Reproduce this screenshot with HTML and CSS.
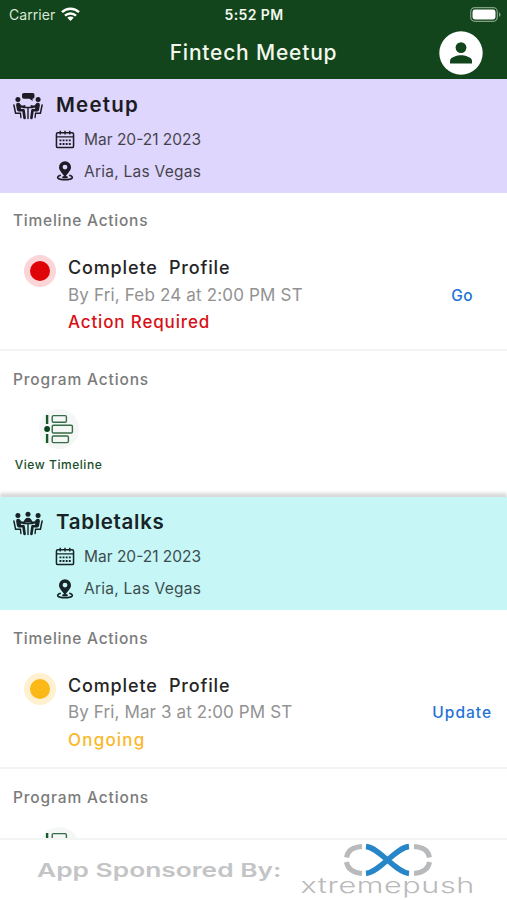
FILE: index.html
```html
<!DOCTYPE html>
<html lang="en">
<head>
<meta charset="utf-8">
<title>Fintech Meetup</title>
<link rel="stylesheet" href="styles.css">
</head>
<body>
<svg class="defs" aria-hidden="true">
  <symbol id="calendar" viewBox="0 0 20 20">
    <rect x="1" y="3" width="18" height="15.500" rx="1.500" fill="none" stroke="currentColor" stroke-width="1.600"/>
    <path d="M1 7.200h18M5 .8v4M10 .8v4M15 .8v4" fill="none" stroke="currentColor" stroke-width="1.500"/>
    <path d="M4.200 10.900h11.800M4.200 14.700h11.800" fill="none" stroke="currentColor" stroke-width="2" stroke-dasharray="2 1.270"/>
  </symbol>
  <symbol id="pin" viewBox="0 0 18 20">
    <path fill="currentColor" fill-rule="evenodd" d="M9 .2a6 6 0 0 0-6 6C3 9.700 6.500 12 9 16.200c2.500-4.200 6-6.500 6-10A6 6 0 0 0 9 .2zm0 3.500a2.400 2.400 0 1 1 0 4.800 2.400 2.400 0 0 1 0-4.800z"/>
    <path d="M4.800 14.300C-.5 15.500.8 18.700 9 18.700s9.500-3.200 4.200-4.400" fill="none" stroke="currentColor" stroke-width="1.600"/>
    <ellipse cx="9" cy="16.200" rx="3" ry="1.200" fill="currentColor"/>
  </symbol>
  <symbol id="seated" viewBox="0 0 30 23">
    <g fill="none" stroke="currentColor" stroke-linecap="round" stroke-linejoin="round">
      <path stroke-width="1.500" d="M.9 8l1.700 8.300h4.800M29.100 8l-1.700 8.300h-4.800"/>
      <path stroke-width="4.200" d="M5.200 7.800l.8 4.600M24.800 7.800l-.8 4.600"/>
      <path stroke-width="2" d="M6 7.500l2.600 2.300 3-.7M24 7.500l-2.600 2.300-3-.7"/>
      <path stroke-width="2.600" d="M7 13.200h3.500l1.100 7.800M23 13.200h-3.500l-1.100 7.800"/>
      <path stroke-width="1.400" d="M7.500 16.500l.4 4M22.500 16.500l-.4 4M10 10.500h10M15 11v10.500"/>
    </g>
    <circle cx="4.900" cy="2.600" r="2.500" fill="currentColor"/><circle cx="25.100" cy="2.600" r="2.500" fill="currentColor"/>
  </symbol>
  <symbol id="timeline" viewBox="0 0 40 40">
    <circle cx="20" cy="20" r="20" fill="#f5f7f6"/>
    <g fill="none" stroke="#356b47" stroke-width="1.400">
      <rect x="13.200" y="6.600" width="14.200" height="6.600" rx="1.300"/>
      <rect x="13.200" y="16.200" width="20.200" height="7.800" rx="1.300"/>
      <rect x="13.200" y="27" width="16.200" height="6.600" rx="1.300"/>
      <path stroke="#19572d" stroke-width="2.400" d="M8.100 6v9M8.100 25v9"/>
    </g>
    <circle cx="8.100" cy="20" r="2.900" fill="#0c4321"/>
  </symbol>
</svg>

<div class="phone">
  <header class="top">
    <div class="status">
      <div class="carrier"><span>Carrier</span>
        <svg width="19" height="14" viewBox="0 0 19 14"><g fill="none" stroke="#fff" stroke-width="2.500"><path d="M1 5.200a12.200 12.200 0 0 1 17 0M4 8.600a8 8 0 0 1 11 0"/></g><path d="M6.300 10.700a4.600 4.600 0 0 1 6.400 0L9.500 14z" fill="#fff"/></svg>
      </div>
      <span class="clock">5:52 PM</span>
      <svg class="battery" width="31" height="15" viewBox="0 0 31 15"><rect x=".7" y=".7" width="26.600" height="13.600" rx="4" fill="none" stroke="#82a184" stroke-width="1.200"/><rect x="2.500" y="2.500" width="23" height="10" rx="2.400" fill="#fff"/><path d="M29 5.200c2 .8 2 3.800 0 4.600z" fill="#82a184"/></svg>
    </div>
    <div class="titlebar">
      <h1>Fintech Meetup</h1>
      <svg class="avatar" width="44" height="44" viewBox="0 0 44 44"><circle cx="22" cy="22" r="21.700" fill="#fff"/><circle cx="22" cy="16.600" r="5.400" fill="#12451c"/><path d="M11 32.500v-2.700c0-3.600 7.300-5.500 11-5.500s11 1.900 11 5.500v2.700z" fill="#12451c"/></svg>
    </div>
  </header>

  <main class="feed">
    <section class="card">
      <div class="event event-meetup">
        <svg class="group" width="30" height="28" viewBox="0 0 30 28"><path d="M11 0h8.500c1.500 0 2 .7 2 2v1.800c0 1.300-.7 2-2 2l.2 2.200-3.200-2.200H11c-1.400 0-2-.7-2-2V2c0-1.300.6-2 2-2z" fill="#1e1b26"/><use href="#seated" y="4" width="30" height="23"/></svg>
        <h2 class="name-meetup">Meetup</h2>
        <div class="detail"><svg width="20" height="19"><use href="#calendar"/></svg><span class="date">Mar 20-21 2023</span></div>
        <div class="detail"><svg width="20" height="20"><use href="#pin"/></svg><span class="place">Aria, Las Vegas</span></div>
      </div>
      <div class="timeline">
        <h3 class="label-timeline">Timeline Actions</h3>
        <div class="task">
          <i class="dot dot-red"></i>
          <div class="task-text"><p class="task-name">Complete&nbsp; Profile</p><p class="due due-feb">By Fri, Feb 24 at 2:00 PM ST</p><p class="state required">Action Required</p></div>
          <a class="link-go">Go</a>
        </div>
      </div>
      <div class="program">
        <h3 class="label-program">Program Actions</h3>
        <div class="tile"><svg width="40" height="40"><use href="#timeline"/></svg><span>View Timeline</span></div>
      </div>
    </section>

    <section class="card">
      <div class="event event-talks">
        <svg class="group" width="30" height="28" viewBox="0 0 30 28"><use href="#seated" y="3" width="30" height="23"/><circle cx="15" cy="4.200" r="2.500" fill="#172326"/><path d="M10.800 12.500c0-6.500 8.400-6.500 8.400 0z" fill="#172326"/></svg>
        <h2 class="name-talks">Tabletalks</h2>
        <div class="detail"><svg width="20" height="19"><use href="#calendar"/></svg><span class="date">Mar 20-21 2023</span></div>
        <div class="detail"><svg width="20" height="20"><use href="#pin"/></svg><span class="place">Aria, Las Vegas</span></div>
      </div>
      <div class="timeline">
        <h3 class="label-timeline">Timeline Actions</h3>
        <div class="task">
          <i class="dot dot-yellow"></i>
          <div class="task-text"><p class="task-name">Complete&nbsp; Profile</p><p class="due due-mar">By Fri, Mar 3 at 2:00 PM ST</p><p class="state ongoing">Ongoing</p></div>
          <a class="link-update">Update</a>
        </div>
      </div>
      <div class="program">
        <h3 class="label-program">Program Actions</h3>
        <div class="tile"><svg width="40" height="40"><use href="#timeline"/></svg></div>
      </div>
    </section>
  </main>

  <footer class="sponsor">
    <span class="sponsor-label">App Sponsored By:</span>
    <div class="brand">
      <svg width="90" height="34" viewBox="0 0 90 34"><g fill="none" stroke-width="5"><path d="M19 3.500C10 4 4.500 8 3.500 14.500M3.500 19C4.500 25.500 10 30 19 30.500M71 3.500c9 .5 14.500 4.500 15.500 11M86.500 19C85.500 25.500 80 30 71 30.500" stroke="#b8babc"/><path d="M23 3.500C37 5 52 29 66 30.500M66 3.500C52 5 37 29 23 30.500" stroke="#2786c8" stroke-width="5.400"/></g></svg>
      <span class="wordmark">xtremepush</span>
    </div>
  </footer>
</div>
</body>
</html>
```

FILE: styles.css
```css
* { box-sizing: border-box; margin: 0; padding: 0; }
body { width: 507px; height: 900px; overflow: hidden; background: #fff; font-family: Inter, "Open Sans", sans-serif; }
svg { display: block; flex: none; }
span, p, a, h1, h2, h3 { white-space: nowrap; }
.defs { position: absolute; width: 0; height: 0; }
.phone { display: flex; flex-direction: column; height: 900px; }

.top { flex: none; height: 79px; background: #12451c; color: #f3f8ee; }
.status { display: grid; grid-template-columns: 1fr auto 1fr; align-items: center; height: 28px; padding: 0 8px 0 9px; }
.carrier { display: flex; align-items: center; gap: 6px; font-size: 14px; letter-spacing: 0.05px; color: #d9e6d5; }
.clock { font-size: 14px; font-weight: 600; letter-spacing: 0.4px; }
.battery { justify-self: end; margin-right: -2px; }
.titlebar { display: grid; grid-template-columns: 1fr auto 1fr; align-items: center; height: 49px; padding-right: 24px; padding-left: 24px; }
.titlebar h1 { grid-column: 2; font-size: 21px; font-weight: 450; letter-spacing: 0.8px; }
.avatar { justify-self: end; }

.feed { flex: 1; min-height: 0; overflow: hidden; }
.card { height: 417.500px; }
.card + .card { box-shadow: 0 -4px 3px #d9dbdb; }
.event { display: grid; grid-template-columns: 42px 1fr; grid-template-rows: 38px 32px 32px; align-items: center; height: 113.500px; padding: 6px 0 0 14px; color: #1d1b23; }
.event-meetup { background: #ded6fc; }
.event-talks { background: #c6f6f5; color: #172326; }
.group { margin: 5px 0 0 -1px; }
.event h2 { font-size: 20.5px; font-weight: 600; }
.name-meetup { letter-spacing: 1.2px; }
.name-talks { letter-spacing: 0.7px; }
.detail { grid-column: 2; display: flex; align-items: center; gap: 9px; margin-left: -1px; font-size: 15.5px; }
.detail span { opacity: 0.8; }
.place { letter-spacing: 0.25px; }

h3 { padding-left: 13px; font-size: 15.5px; font-weight: 450; line-height: 20px; color: #7b7b7b; }
.label-timeline { letter-spacing: 0.75px; }
.label-program { letter-spacing: 0.85px; }
.timeline { height: 158.500px; padding-top: 18.500px; border-bottom: 2px solid #f3f3f3; }
.task { display: flex; padding: 23px 16px 0 24px; }
.dot { flex: none; width: 32px; height: 32px; margin-top: 1px; border: 6.5px solid; border-radius: 50%; }
.dot-red { border-color: #fbd5d8; background: #df0408; }
.dot-yellow { border-color: #fff0cf; background: #fbb817; }
.task-text { flex: 1; padding-left: 12px; }
.task-text p { height: 27.500px; line-height: 27.500px; font-size: 17px; }
.task-text .task-name { font-size: 18px; font-weight: 450; letter-spacing: 0.85px; color: #252525; }
.due { color: #929292; }
.due-feb { letter-spacing: 0.17px; }
.due-mar { letter-spacing: 0.12px; }
.state { font-weight: 450; }
.required { letter-spacing: 0.85px; color: #d80f16; }
.ongoing { letter-spacing: 1.2px; color: #f9b827; }
.task a { align-self: center; font-size: 15.5px; font-weight: 450; color: #2473d5; }
.link-go { margin-right: 18px; letter-spacing: 0.4px; }
.link-update { letter-spacing: 1px; margin-right: -1px; }
.program { padding-top: 19px; }
.tile { display: flex; flex-direction: column; align-items: center; gap: 8px; width: 89px; margin: 19px 0 0 14px; }
.tile span { font-size: 12px; font-weight: 500; line-height: 16px; letter-spacing: 0.55px; color: #19502b; }

.sponsor { flex: none; display: flex; align-items: center; height: 62px; padding-left: 37px; border-top: 2px solid #f3f4f4; background: #fff; }
.sponsor-label { width: 265px; font-size: 19px; font-weight: 600; color: #c3c4c5; transform: scaleX(1.385); transform-origin: left; }
.brand { display: flex; flex-direction: column; align-items: center; width: 172px; height: 60px; padding-top: 3px; }
.wordmark { margin-top: -5px; font-family: Inter, sans-serif; font-size: 22px; font-weight: 300; line-height: 26px; letter-spacing: 0.4px; color: #b9babb; transform: scaleX(1.39); }
```
